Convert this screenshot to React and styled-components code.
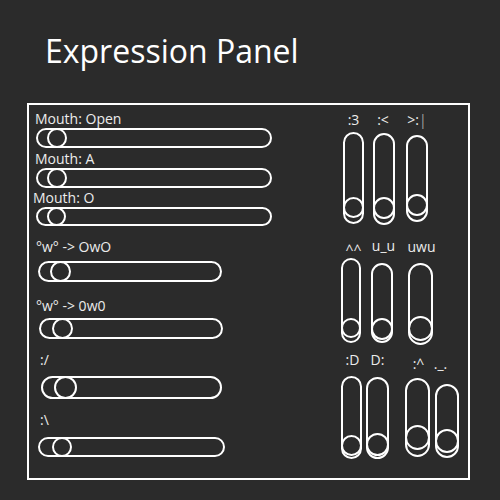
import React from "react";
import styled, { createGlobalStyle } from "styled-components";

const GlobalStyle = createGlobalStyle`
  html, body { margin: 0; padding: 0; background: #2b2b2b; }
  body { font-family: "Open Sans", "Noto Sans", sans-serif; }
`;

const Page = styled.div`
  width: 500px;
  height: 500px;
  background: #2b2b2b;
  display: flex;
  flex-direction: column;
  overflow: hidden;
`;

const Title = styled.h1`
  margin: 30px 0 0 45px;
  font-size: 32px;
  line-height: 42px;
  font-weight: 400;
  color: #ffffff;
`;

const Panel = styled.div`
  margin: 31px 0 0 27px;
  width: 443px;
  height: 377px;
  border: 2px solid #ffffff;
  box-sizing: border-box;
  display: flex;
`;

const LeftCol = styled.div`
  width: 309px;
  padding-left: 3px;
  box-sizing: border-box;
  display: flex;
  flex-direction: column;
`;

const HRow = styled.div`
  display: flex;
  flex-direction: column;
  align-items: flex-start;
  margin-top: ${(p) => p.$mt}px;
`;

const Label = styled.div`
  font-size: 14px;
  line-height: 16px;
  color: #ececec;
  white-space: nowrap;
`;

const HLabel = styled(Label)`
  margin-left: ${(p) => p.$indent}px;
`;

const HTrack = styled.div`
  position: relative;
  margin-top: ${(p) => p.$gap}px;
  margin-left: ${(p) => p.$indent}px;
  width: ${(p) => p.$w}px;
  height: ${(p) => p.$h}px;
  border: 2px solid #ffffff;
  border-radius: 999px;
  box-sizing: border-box;
`;

const HKnob = styled.div`
  position: absolute;
  top: -2px;
  left: ${(p) => p.$off - 2}px;
  width: ${(p) => p.$size}px;
  height: ${(p) => p.$size}px;
  border: 2px solid #ffffff;
  border-radius: 50%;
  box-sizing: border-box;
`;

const RightCol = styled.div`
  display: flex;
  flex-direction: column;
`;

const VRow = styled.div`
  display: flex;
  align-items: flex-start;
  height: ${(p) => p.$h}px;
`;

const VItem = styled.div`
  display: flex;
  flex-direction: column;
  align-items: center;
  width: ${(p) => p.$w}px;
  margin-left: ${(p) => p.$ml}px;
  margin-top: ${(p) => p.$mt}px;
`;

const VLabel = styled(Label)`
  margin-bottom: ${(p) => p.$gap}px;
  margin-left: ${(p) => (p.$shift > 0 ? p.$shift * 2 : 0)}px;
  margin-right: ${(p) => (p.$shift < 0 ? -p.$shift * 2 : 0)}px;
`;

const Caret = styled.span`
  color: #a0a0a0;
`;

const VTrack = styled.div`
  position: relative;
  width: ${(p) => p.$w}px;
  height: ${(p) => p.$h}px;
  border: 2px solid #ffffff;
  border-radius: 999px;
  box-sizing: border-box;
`;

const VKnob = styled.div`
  position: absolute;
  left: -2px;
  bottom: ${(p) => p.$off - 2}px;
  width: ${(p) => p.$w}px;
  height: ${(p) => p.$w}px;
  border: 2px solid #ffffff;
  border-radius: 50%;
  box-sizing: border-box;
`;

const hSliders = [
  { label: "Mouth: Open", mt: 6, li: 3, gap: 1, ti: 4, w: 236, h: 20, off: 11 },
  { label: "Mouth: A", mt: 3, li: 3, gap: 1, ti: 4, w: 236, h: 20, off: 11 },
  { label: "Mouth: O", mt: 2, li: 1, gap: 1, ti: 4, w: 236, h: 19, off: 11 },
  { label: "°w° -> OwO", mt: 13, li: 4, gap: 6, ti: 6, w: 184, h: 21, off: 12 },
  { label: "°w° -> 0w0", mt: 16, li: 4, gap: 4, ti: 7, w: 184, h: 21, off: 13 },
  { label: ":/", mt: 13, li: 8, gap: 8, ti: 9, w: 181, h: 23, off: 13 },
  { label: ":\\", mt: 13, li: 8, gap: 9, ti: 6, w: 187, h: 20, off: 14 },
];

const vRows = [
  {
    h: 120,
    items: [
      { label: ":3", ml: 5, mt: 7, gap: 4, w: 21, h: 92, off: 6, shift: 0 },
      { label: ":<", ml: 9, mt: 7, gap: 5, w: 22, h: 92, off: 6, shift: -1 },
      { label: ">:", caret: true, ml: 11, mt: 7, gap: 7, w: 22, h: 87, off: 6, shift: 0 },
    ],
  },
  {
    h: 120,
    items: [
      { label: "^^", ml: 3, mt: 17, gap: 0, w: 20, h: 85, off: 5, shift: 2.5 },
      { label: "u_u", ml: 10, mt: 13, gap: 9, w: 22, h: 80, off: 3, shift: 1.5 },
      { label: "uwu", ml: 15, mt: 14, gap: 8, w: 25, h: 82, off: 4, shift: 1 },
    ],
  },
  {
    h: 133,
    items: [
      { label: ":D", ml: 3, mt: 7, gap: 8, w: 21, h: 83, off: 3, shift: 1 },
      { label: "D:", ml: 4, mt: 7, gap: 9, w: 23, h: 82, off: 3, shift: 0 },
      { label: ":^", ml: 16, mt: 11, gap: 6, w: 25, h: 79, off: 7, shift: 1 },
      { label: "._.", ml: 5, mt: 11, gap: 12, w: 24, h: 74, off: 5, shift: -6.5 },
    ],
  },
];

export default function App() {
  return (
    <Page>
      <GlobalStyle />
      <Title>Expression Panel</Title>
      <Panel>
        <LeftCol>
          {hSliders.map((s) => (
            <HRow key={s.label} $mt={s.mt}>
              <HLabel $indent={s.li}>{s.label}</HLabel>
              <HTrack $gap={s.gap} $indent={s.ti} $w={s.w} $h={s.h}>
                <HKnob $off={s.off} $size={s.h} />
              </HTrack>
            </HRow>
          ))}
        </LeftCol>
        <RightCol>
          {vRows.map((row, i) => (
            <VRow key={i} $h={row.h}>
              {row.items.map((it) => (
                <VItem key={it.label} $w={it.w} $ml={it.ml} $mt={it.mt}>
                  <VLabel $gap={it.gap} $shift={it.shift}>
                    {it.label}
                    {it.caret && <Caret>|</Caret>}
                  </VLabel>
                  <VTrack $w={it.w} $h={it.h}>
                    <VKnob $w={it.w} $off={it.off} />
                  </VTrack>
                </VItem>
              ))}
            </VRow>
          ))}
        </RightCol>
      </Panel>
    </Page>
  );
}
